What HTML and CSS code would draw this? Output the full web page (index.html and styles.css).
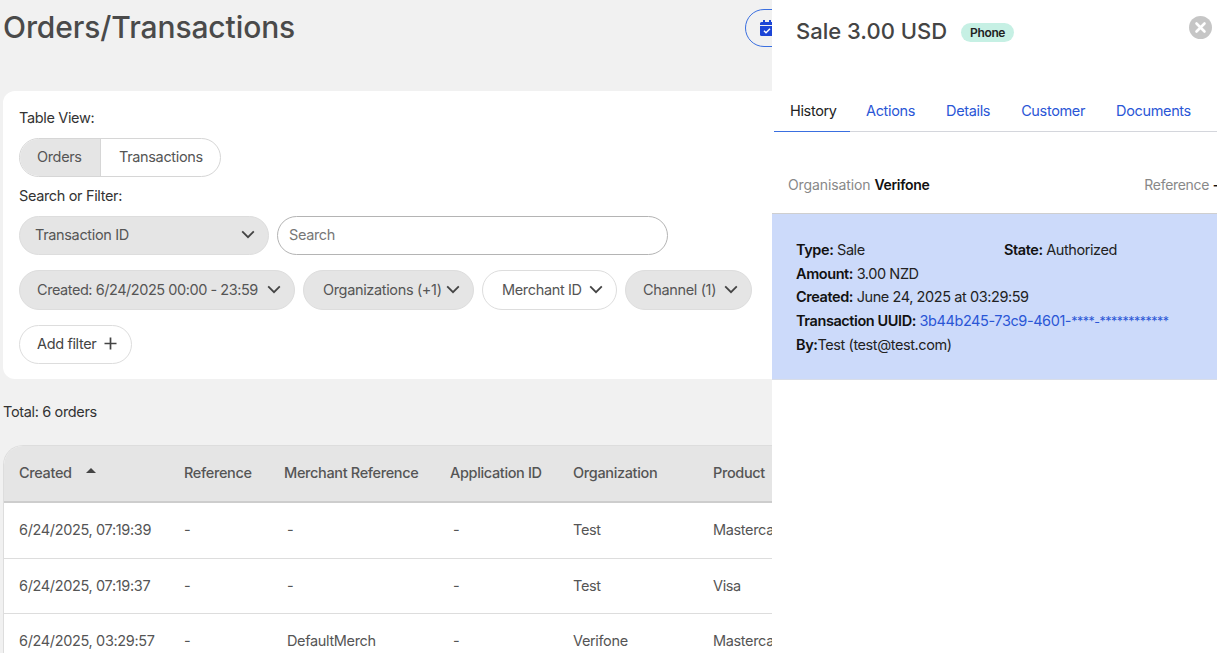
FILE: index.html
```html
<!DOCTYPE html><html><head><meta charset="utf-8">
<meta name="viewport" content="initial-scale=1.0, width=device-width">
<title>Orders/Transactions</title>
<link rel="stylesheet" href="styles.css">
</head>
<body>
<svg class="defs" width="0" height="0" aria-hidden="true">
  <symbol id="chev" viewBox="0 0 14 9"><path d="M1.2 1.400 L7 7.200 L12.800 1.400" fill="none" stroke="currentColor" stroke-width="1.800"/></symbol>
</svg>

<div class="main">
  <div class="page-head">
    <h1>Orders/Transactions</h1>
    <button type="button" class="date-btn">
      <svg width="14" height="16" viewBox="0 0 14 16"><path fill="#1c45d6" d="M3 0h2v2h4V0h2v2h1.500Q14 2 14 3.500V5H0V3.500Q0 2 1.500 2H3z"/><path fill="#1c45d6" d="M0 6h14v8.500Q14 16 12.500 16h-11Q0 16 0 14.500z"/><path d="M4 10.800l2 2 4-4" fill="none" stroke="#fff" stroke-width="1.500"/></svg>
    </button>
  </div>

  <div class="card">
    <div class="label">Table View:</div>
    <div class="toggle">
      <span class="seg seg-on">Orders</span>
      <span class="seg">Transactions</span>
    </div>
    <div class="label label-search">Search or Filter:</div>
    <div class="search-row">
      <div class="select">Transaction ID <svg class="chev" width="14" height="9"><use href="#chev"/></svg></div>
      <div class="search-input">Search</div>
    </div>
    <div class="chips">
      <div class="chip chip-on chip-created">Created: 6/24/2025 00:00 - 23:59 <svg class="chev" width="14" height="9"><use href="#chev"/></svg></div>
      <div class="chip chip-on chip-org">Organizations (+1) <svg class="chev" width="14" height="9"><use href="#chev"/></svg></div>
      <div class="chip chip-merch">Merchant ID <svg class="chev" width="14" height="9"><use href="#chev"/></svg></div>
      <div class="chip chip-on chip-chan">Channel (1) <svg class="chev" width="14" height="9"><use href="#chev"/></svg></div>
    </div>
    <div class="chip chip-add">Add filter
      <svg width="13" height="13" viewBox="0 0 13 13"><path d="M6.500 0.500v12M0.500 6.500h12" stroke="#444" stroke-width="1.700" fill="none"/></svg>
    </div>
  </div>

  <div class="total">Total: 6 orders</div>

  <div class="table-wrap">
    <table class="orders">
      <colgroup>
        <col class="c1"><col class="c2"><col class="c3"><col class="c4"><col class="c5"><col class="c6">
      </colgroup>
      <thead>
        <tr>
          <th>Created <span class="caret"></span></th>
          <th>Reference</th>
          <th>Merchant Reference</th>
          <th>Application ID</th>
          <th>Organization</th>
          <th>Product</th>
        </tr>
      </thead>
      <tbody>
        <tr class="row-first"><td>6/24/2025, 07:19:39</td><td>-</td><td class="in">-</td><td class="in">-</td><td>Test</td><td>Mastercard</td></tr>
        <tr><td>6/24/2025, 07:19:37</td><td>-</td><td class="in">-</td><td class="in">-</td><td>Test</td><td>Visa</td></tr>
        <tr><td>6/24/2025, 03:29:57</td><td>-</td><td class="in">DefaultMerch</td><td class="in">-</td><td>Verifone</td><td>Mastercard</td></tr>
      </tbody>
    </table>
  </div>
</div>

<aside class="panel">
  <div class="panel-head">
    <h2>Sale 3.00 USD</h2>
    <span class="badge">Phone</span>
    <svg class="close" width="23" height="23" viewBox="0 0 23 23"><circle cx="11.500" cy="11.500" r="11.500" fill="#c6c6c6"/><path d="M7.500 7.500l8 8M15.500 7.500l-8 8" stroke="#fff" stroke-width="2.600" stroke-linecap="round"/></svg>
  </div>
  <div class="tabs">
    <span class="tab tab-on">History</span>
    <span class="tab">Actions</span>
    <span class="tab">Details</span>
    <span class="tab">Customer</span>
    <span class="tab">Documents</span>
  </div>
  <div class="org-row">
    <span><span class="muted">Organisation</span> <b>Verifone</b></span>
    <span class="ref"><span class="muted">Reference</span> <b>-</b></span>
  </div>
  <div class="history">
    <div class="line line-split"><span><b>Type:</b> Sale</span><span><b>State:</b> Authorized</span></div>
    <div class="line"><b>Amount:</b> 3.00 NZD</div>
    <div class="line"><b>Created:</b> June 24, 2025 at 03:29:59</div>
    <div class="line"><b>Transaction UUID:</b> <a href="#">3b44b245-73c9-4601-<span class="stars">****-************</span></a></div>
    <div class="line"><b>By:</b>Test (test@test.com)</div>
  </div>
</aside>
</body>
</html>
```

FILE: styles.css
```css
html,body,div,h1,h2,table{margin:0;padding:0;}
*{box-sizing:border-box;}
html,body{height:100%;overflow:hidden;}
body{
  color:#444;
  font-size:14.500px;
  letter-spacing:-0.350px;
  font-family:Inter,"Liberation Sans",Arial,sans-serif;
  background:#f1f1f1;
  position:relative;
}
.defs{position:absolute;}
.main{padding:0 0 0 3px;}

.page-head{display:flex;align-items:flex-start;gap:450px;height:91px;padding-top:9px;}
h1{font-size:30px;font-weight:500;line-height:36px;letter-spacing:-0.100px;color:#4a4a4a;width:292px;white-space:nowrap;}
.date-btn{
  width:120px;height:38px;
  padding:0 0 0 14px;
  display:flex;align-items:center;
  border:1px solid #3a6fe0;
  border-radius:19px;
  background:#f1f1f1;
}

.card{
  background:#fff;
  border-radius:12px 0 0 12px;
  height:288px;
  padding:17px 16px 0;
}
.label{color:#333;line-height:20px;}
.toggle{
  display:inline-flex;
  height:39px;
  margin-top:10px;
  border:1px solid #d6d6d6;
  border-radius:20px;
  overflow:hidden;
}
.seg{padding:0 17px;line-height:35px;color:#555;white-space:nowrap;}
.seg-on{background:#e5e5e5;border-right:1px solid #d6d6d6;width:81px;}
.seg:last-child{width:119px;padding-left:18px;}
.label-search{margin-top:9px;}
.search-row{display:flex;gap:8px;margin-top:10px;}
.select{
  width:250px;height:39px;
  padding:0 13px 2px 15px;
  display:flex;align-items:center;justify-content:space-between;
  background:#e5e5e5;
  border:1px solid #ddd;
  border-radius:20px;
  color:#555;
}
.search-input{
  width:391px;height:39px;
  padding:0 11px 2px;
  display:flex;align-items:center;
  border:1px solid #b4b4b4;
  border-radius:20px;
  color:#777;
}
.chips{display:flex;gap:8px;margin-top:15px;}
.chip{
  height:40px;
  padding:0 13px 2px 17px;
  display:flex;align-items:center;justify-content:space-between;
  border:1px solid #ddd;
  border-radius:20px;
  background:#fff;
  color:#555;
  white-space:nowrap;
}
.chip-on{background:#e5e5e5;}
.chip-created{width:276px;letter-spacing:-0.450px;}
.chip-org{width:171px;padding-left:19px;}
.chip-merch{width:135px;padding-left:19px;}
.chip-chan{width:127px;}
.chip-add{width:113px;height:39px;margin-top:15px;color:#444;padding-right:14px;}
.chev{color:#444;flex:none;}

.total{margin-top:23px;height:20px;line-height:20px;color:#333;}
.table-wrap{
  margin-top:23px;
  background:#fff;
  border:1px solid #ddd;
  border-right:none;
  border-bottom:none;
  border-radius:20px 0 0 0;
  overflow:hidden;
}
.orders{border-collapse:collapse;table-layout:fixed;width:870px;}
.c1{width:165px;}
.c2{width:100px;}
.c3{width:166px;}
.c4{width:123px;}
.c5{width:140px;}
.c6{width:176px;}
.orders th{
  height:56px;
  padding:0 0 3px 15px;
  text-align:left;
  font-weight:500;
  color:#555;
  background:#e5e5e5;
  border-bottom:2px solid #cdcdcd;
  white-space:nowrap;
}
.orders td{
  height:55px;
  padding:0 0 1px 15px;
  color:#555;
  border-bottom:1px solid #ddd;
  white-space:nowrap;
}
.row-first td{height:56px;padding-bottom:2px;}
.orders td.in{padding-left:18px;}
.caret{
  display:inline-block;
  width:0;height:0;
  margin:0 0 5px 11px;
  border-left:5px solid transparent;
  border-right:5px solid transparent;
  border-bottom:5px solid #444;
}

/* drawer lying over the page */
.panel{
  position:absolute;
  top:0;right:0;bottom:0;
  width:445px;
  background:#fff;
  overflow:hidden;
}
.panel-head{display:flex;align-items:center;height:61px;padding:0 5px 0 24px;}
h2{font-size:22px;font-weight:500;letter-spacing:0;color:#444;white-space:nowrap;}
.badge{
  margin:3px 0 0 14px;
  width:53px;height:19px;
  text-align:center;
  line-height:19px;
  font-size:12px;
  font-weight:600;
  color:#222;
  background:#c6f0e4;
  border-radius:10px;
}
.close{margin:-6px 0 0 auto;}
.tabs{display:flex;margin:24px 0 0 2px;height:47px;border-bottom:1px solid #d4d6dc;padding-top:16px;width:443px;}
.tab{flex:none;color:#2a56d6;line-height:20px;margin-right:31px;white-space:nowrap;}
.tab-on{
  color:#222;
  width:76px;
  margin-right:16px;
  height:31px;
  padding-left:16px;
  border-bottom:1px solid #3a6fe0;
}
.org-row{
  display:flex;justify-content:space-between;
  height:81px;
  padding:43px 0 0 16px;
  width:447px;
  font-size:14px;
  letter-spacing:-0.100px;
  line-height:20px;
}
.muted{color:#888;}
.org-row b{color:#111;font-weight:600;letter-spacing:-0.300px;}
.ref{white-space:nowrap;letter-spacing:-0.300px;}
.history{
  height:167px;
  padding:24px 24px 0;
  background:#ccdafa;
  border-top:1px solid #cfcfcf;
  border-bottom:1px solid #d8dde8;
  color:#222;
}
.line{line-height:23.500px;white-space:nowrap;letter-spacing:-0.420px;}
.line b{font-weight:600;color:#111;}
.line-split{display:flex;}
.line-split span:first-child{width:208px;}
.line a{color:#2a56d6;text-decoration:none;}
.stars{font-size:12.500px;letter-spacing:-0.500px;}
```
